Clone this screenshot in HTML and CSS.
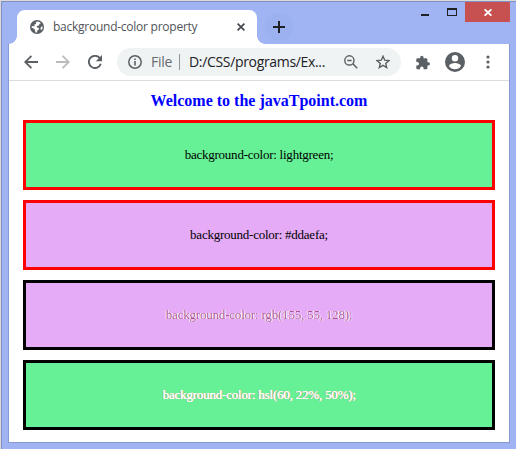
FILE: index.html
```html
<!DOCTYPE html>
<html lang="en">
<head>
<meta charset="utf-8">
<title>background-color property</title>
<link rel="stylesheet" href="styles.css">
</head>
<body>
<div class="window">
  <header class="titlebar">
    <div class="tab">
      <svg class="globe" width="14" height="14" viewBox="0 0 14 14"><circle cx="7" cy="7" r="7" fill="#5b6065"/><path d="M7.6 1.6 5.8 2.2 6 4 4.3 4.6 4.7 6.3 2 6.1 1.4 7.2 4.6 9.3 5.6 12.4 7 12.6 7.3 10.6 8.9 9.6 8.8 8.1 6.7 7.3 7 5.9 8.8 5.4 9.6 3.8 11 3.3Q9.4 1.8 7.6 1.6ZM12.5 6.2 10.9 7 10.4 9.2 11.8 9.9Q12.9 8.3 12.5 6.2Z" fill="#fff"/></svg>
      <span class="tab-title">background-color property</span>
      <svg class="tab-close" width="8" height="8" viewBox="0 0 8 8"><path d="M.6.6 7.4 7.4M7.4.6.6 7.4" stroke="#45494d" stroke-width="1.7"/></svg>
    </div>
    <div class="new-tab"><svg width="12" height="12" viewBox="0 0 12 12"><path d="M6 0V12M0 6H12" stroke="#202124" stroke-width="2"/></svg></div>
    <div class="controls">
      <i class="minimize"></i><i class="maximize"></i>
      <div class="close"><svg width="8" height="7" viewBox="0 0 8 7"><path d="M.6.3 7.4 6.7M7.4.3.6 6.7" stroke="#fff" stroke-width="1.8"/></svg></div>
    </div>
  </header>
  <main class="client">
    <nav class="toolbar">
      <svg class="back" width="14" height="14" viewBox="0 0 14 14"><path d="M14 7H1.4M7.4.8 1.2 7l6.2 6.2" fill="none" stroke="#5b6065" stroke-width="1.8"/></svg>
      <svg class="forward" width="14" height="14" viewBox="0 0 14 14"><path d="M0 7H12.6M6.6.8 12.8 7l-6.2 6.2" fill="none" stroke="#b9bbbd" stroke-width="1.8"/></svg>
      <svg class="reload" width="14" height="14" viewBox="0 0 14 14"><path d="M11.8 3.2A6.1 6.1 0 1 0 12.8 8.8" fill="none" stroke="#5b6065" stroke-width="1.9"/><path d="M14 0V6.2H7.8Z" fill="#5b6065"/></svg>
      <div class="address">
        <svg width="14" height="14" viewBox="0 0 14 14"><circle cx="7" cy="7" r="6.2" fill="none" stroke="#5b6065" stroke-width="1.5"/><path d="M7 6.1V10.6M7 3.4V5" stroke="#5b6065" stroke-width="1.6"/></svg>
        <span class="scheme">File</span>
        <i class="divider"></i>
        <span class="path">D:/CSS/programs/Ex...</span>
        <svg class="zoom" width="14" height="14" viewBox="0 0 14 14"><circle cx="5.4" cy="5.4" r="4.6" fill="none" stroke="#5b6065" stroke-width="1.4"/><path d="M8.8 8.8 13.2 13.2M3.2 5.4H7.6" stroke="#5b6065" stroke-width="1.5"/></svg>
        <svg class="star" width="14" height="14" viewBox="0 0 14 14"><path d="M7 1.3 8.7 5.2 13 5.6 9.7 8.4 10.7 12.6 7 10.4 3.3 12.6 4.3 8.4 1 5.6 5.3 5.2Z" fill="none" stroke="#5b6065" stroke-width="1.4"/></svg>
      </div>
      <svg class="puzzle" width="15" height="15" viewBox="0 0 23 23"><path d="M20.5 11H19V7c0-1.1-.9-2-2-2h-4V3.5a2.5 2.5 0 0 0-5 0V5H4c-1.1 0-2 .9-2 2v3.8h1.5a2.7 2.7 0 0 1 0 5.4H2V20c0 1.1.9 2 2 2h3.8v-1.5a2.7 2.7 0 0 1 5.4 0V22H17c1.1 0 2-.9 2-2v-4h1.5a2.5 2.5 0 0 0 0-5Z" fill="#5b6065"/></svg>
      <svg class="profile" width="20" height="20" viewBox="2 2 20 20"><path d="M12 2a10 10 0 1 0 0 20 10 10 0 0 0 0-20Zm0 3a3.2 3.2 0 1 1 0 6.4A3.2 3.2 0 0 1 12 5Zm0 14.2a7.2 7.2 0 0 1-6-3.2c0-2 4-3.1 6-3.1s6 1.1 6 3.1a7.2 7.2 0 0 1-6 3.2Z" fill="#5b6065"/></svg>
      <svg class="menu" width="4" height="14" viewBox="0 0 4 14"><g fill="#5b6065"><circle cx="2" cy="2" r="1.6"/><circle cx="2" cy="7" r="1.6"/><circle cx="2" cy="12" r="1.6"/></g></svg>
    </nav>
    <article class="page">
      <h1>Welcome to the javaTpoint.com</h1>
      <section class="box green red-border"><span class="name">background-color: lightgreen;</span></section>
      <section class="box violet red-border"><span class="hex">background-color: #ddaefa;</span></section>
      <section class="box violet"><span class="rgb">background-color: rgb(155, 55, 128);</span></section>
      <section class="box green"><span class="hsl">background-color: hsl(60, 22%, 50%);</span></section>
    </article>
  </main>
</div>
</body>
</html>
```
FILE: styles.css
```css
* { box-sizing: border-box; }
body { margin: 0; width: 516px; height: 449px; overflow: hidden; background: #d9dad9; }
svg { display: block; flex: none; }
.window { margin: 1px 0 0 1px; width: 515px; height: 448px; background: #a0b3f2; border: solid #8190c1; border-width: 1px 0 0 1px; }
.titlebar { height: 42px; display: flex; padding-left: 15px; }
.tab { position: relative; width: 240px; height: 34px; margin-top: 8px; padding-left: 13px; display: flex; align-items: center; background: #fff; border-radius: 8px 8px 0 0; }
.tab::before, .tab::after { content: ""; position: absolute; bottom: 0; width: 8px; height: 8px; }
.tab::before { left: -8px; background: radial-gradient(circle at 0 0, transparent 7.5px, #fff 8px); }
.tab::after { right: -8px; background: radial-gradient(circle at 100% 0, transparent 7.5px, #fff 8px); }
.tab-title { margin-left: 9px; width: 155px; font: 12px/16px "Open Sans", sans-serif; letter-spacing: -.25px; color: #505458; white-space: nowrap; }
.tab-close { margin-left: auto; margin-right: 12px; }
.new-tab { width: 28px; height: 28px; margin: 11px 0 0 8px; display: flex; align-items: center; justify-content: center; border-radius: 50%; background: #9bb1f0; }
.controls { margin-left: auto; margin-right: 6px; display: flex; align-items: flex-start; }
.minimize { width: 8px; height: 2px; margin: 12px 18px 0 0; background: #202124; }
.maximize { width: 10px; height: 8px; margin: 6px 8px 0 0; border: 1px solid #202124; border-top-width: 2px; }
.close { width: 45px; height: 20px; display: flex; align-items: center; justify-content: center; background: #c75050; }
.client { margin-left: 6px; width: 502px; height: 399px; background: #fff; border: 1px solid #8799d3; border-top: 0; }
.toolbar { height: 37px; display: flex; align-items: center; padding-left: 15px; border-bottom: 1px solid #d9dce0; }
.forward { margin-left: 18px; }
.reload { margin-left: 18px; }
.address { width: 284px; height: 28px; margin-left: 15px; padding-left: 11px; display: flex; align-items: center; border-radius: 14px; background: #eff3f3; font: 14px/20px "Open Sans", sans-serif; white-space: nowrap; }
.scheme { width: 28px; margin-left: 9px; color: #666b70; letter-spacing: -.3px; }
.divider { width: 1px; height: 16px; background: #90959a; }
.path { width: 144px; margin-left: 9px; color: #202124; letter-spacing: -.33px; }
.zoom { margin-left: 11px; }
.star { margin-left: 18px; }
.puzzle { margin-left: 14px; }
.profile { margin-left: 15px; }
.menu { margin-left: 21px; }
.page { padding: 10px 14px 0; font-family: "Liberation Serif", serif; text-align: center; }
h1 { margin: 0 0 10px; font-size: 16px; line-height: 19px; color: #00f; }
.box { height: 70px; margin-bottom: 10px; border: 3px solid #000; display: flex; align-items: center; justify-content: center; font-size: 13px; line-height: 16px; letter-spacing: -.24px; }
.red-border { border-color: #f00; }
.green { background: #66f196; }
.violet { background: #e5abf7; }
.rgb, .hsl { letter-spacing: -.2px; }
.rgb { color: rgb(155 55 128 / 85%); text-shadow: -.8px 0 0 #fff, .8px 0 0 #fff; }
.hsl { color: #fff; text-shadow: .6px 0 0 #fff, -.5px 0 0 hsl(60 22% 50%), .9px .3px 0 hsl(60 22% 50%); }
```
